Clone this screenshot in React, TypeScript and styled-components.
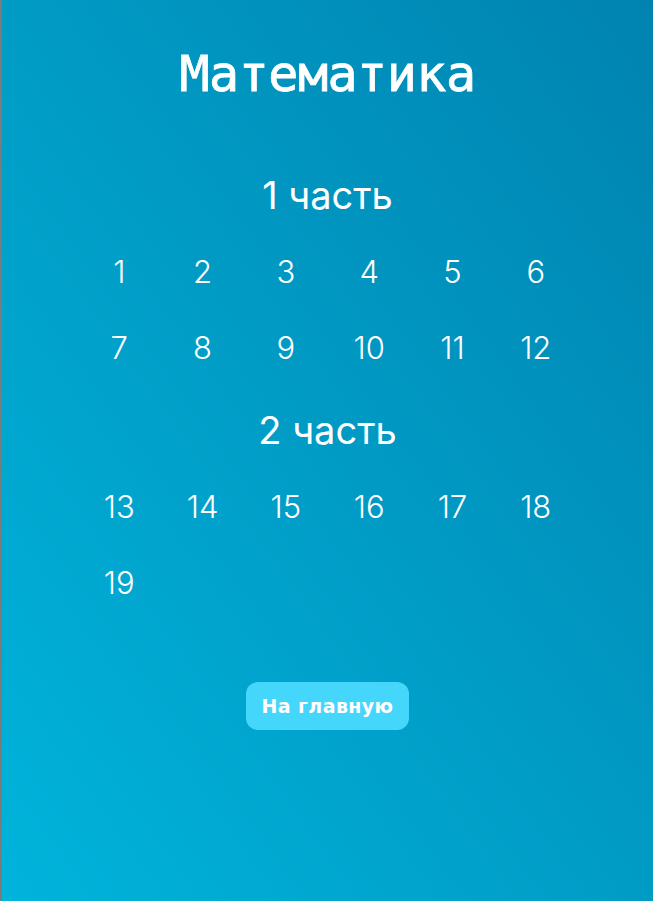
import React from 'react'
import styled, { createGlobalStyle } from 'styled-components'

const GlobalStyle = createGlobalStyle`
    html, body {
        margin: 0;
        padding: 0;
    }
    body {
        font-family: Inter, "Noto Sans", sans-serif;
        color: #fff;
    }
`

const firstPart = [1, 2, 3, 4, 5, 6, 7, 8, 9, 10, 11, 12]
const secondPart = [13, 14, 15, 16, 17, 18, 19]

function Subject() {
    return (
        <Page>
            <Title>Математика</Title>
            <Part>
                <PartTitle>1 часть</PartTitle>
                <TaskGrid>
                    {firstPart.map(n => <TaskLink key={n} href={`#task-${n}`}>{n}</TaskLink>)}
                </TaskGrid>
            </Part>
            <Part>
                <PartTitle>2 часть</PartTitle>
                <TaskGrid>
                    {secondPart.map(n => <TaskLink key={n} href={`#task-${n}`}>{n}</TaskLink>)}
                </TaskGrid>
            </Part>
            <HomeButton>На главную</HomeButton>
        </Page>
    )
}

const Page = styled.div`
    box-sizing: border-box;
    min-height: 100vh;
    border-left: 2px solid #7b7b7b;
    padding-top: 44px;
    display: flex;
    flex-direction: column;
    align-items: center;
    background: linear-gradient(to top right, #00b4db, #0083b0);
`

const Title = styled.h1`
    margin: 0 0 53px;
    font-family: "DejaVu Sans Mono", monospace;
    font-weight: 400;
    font-size: 50px;
    line-height: 60px;
    letter-spacing: -0.5px;
    -webkit-text-stroke: 0.8px #fff;
`

const Part = styled.section`
    display: flex;
    flex-direction: column;
    align-items: center;
    & + & {
        margin-top: 7px;
    }
`

const PartTitle = styled.h2`
    margin: 0;
    font-weight: 400;
    font-size: 38px;
    line-height: 76px;
`

const TaskGrid = styled.div`
    display: grid;
    grid-template-columns: repeat(6, 83.3px);
    grid-auto-rows: 76px;
`

const TaskLink = styled.a`
    display: flex;
    align-items: center;
    justify-content: center;
    color: #fff;
    text-decoration: none;
    font-weight: 300;
    font-size: 31px;
`

const HomeButton = styled.button`
    margin-top: 62px;
    height: 48px;
    padding: 0 15px;
    border: none;
    border-radius: 12px;
    background: #45d6fc;
    color: #fff;
    font-family: "DejaVu Sans", sans-serif;
    font-weight: 700;
    font-size: 19px;
    letter-spacing: 0.4px;
    cursor: pointer;
`

export default function App() {
    return (
        <>
            <GlobalStyle />
            <Subject />
        </>
    )
}
